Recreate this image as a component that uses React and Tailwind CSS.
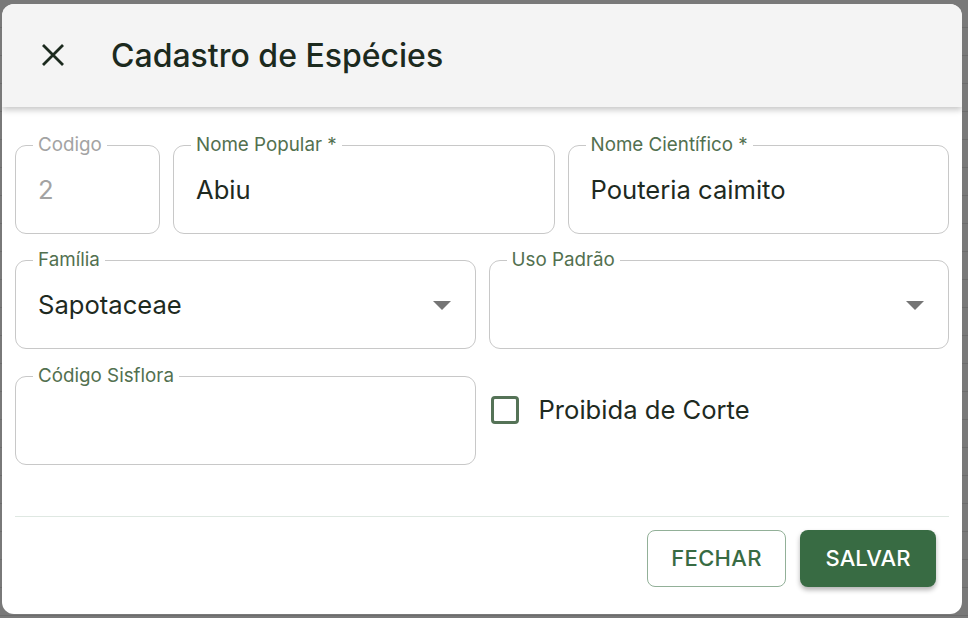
import React from "react";

const font = { fontFamily: "Inter, 'Noto Sans', sans-serif" };

function Field({ label, value, disabled, select, className = "" }) {
  return (
    <fieldset
      className={`h-[100px] min-w-0 rounded-[11px] border border-[#c8c8c8] px-[17px] ${className}`}
    >
      <legend
        className={`px-[5px] text-[18.8px] leading-[22px] ${
          disabled ? "text-[#a3a3a3]" : "text-[#52704f]"
        }`}
      >
        {label}
      </legend>
      <div className="mt-[19px] flex h-[30px] items-center justify-between pl-[5px]">
        <span
          className={`text-[25.6px] leading-[30px] ${
            disabled ? "text-[#a3a3a3]" : "text-[#1e2a1f]"
          }`}
        >
          {value}
        </span>
        {select && (
          <svg width="18" height="9" viewBox="0 0 18 9" className="mr-[7px]">
            <path d="M0 0 L18 0 L9 9 Z" fill="#757575" />
          </svg>
        )}
      </div>
    </fieldset>
  );
}

export default function App() {
  const lines = Array.from({ length: 22 });
  return (
    <div className="relative h-[618px] w-[968px] overflow-hidden bg-[#797979]" style={font}>
      <div className="flex h-full flex-col">
        {lines.map((_, i) => (
          <div key={i} className="h-[28px] shrink-0 border-b border-[#6c6c6c]" />
        ))}
      </div>
      <div className="absolute left-[2px] top-[4px] flex h-[610px] w-[960px] flex-col overflow-hidden rounded-[12px] bg-white">
        <div className="relative z-10 flex h-[103px] shrink-0 items-center bg-[#f4f4f4] pl-[38px] shadow-[0_3px_6px_rgba(0,0,0,0.22)]">
          <svg width="26" height="26" viewBox="0 0 26 26" className="mt-[-2px]">
            <path d="M3 3 L23 23 M23 3 L3 23" stroke="#1c2a1e" strokeWidth="2.8" strokeLinecap="butt" />
          </svg>
          <h1 className="ml-[45px] text-[32px] font-medium leading-none text-[#1c2a1e]">
            Cadastro de Espécies
          </h1>
        </div>
        <div className="flex flex-col px-[13px] pt-[27px]">
          <div className="flex gap-[13px]">
            <Field label="Codigo" value="2" disabled className="w-[145px] shrink-0" />
            <Field label="Nome Popular *" value="Abiu" className="flex-1" />
            <Field label="Nome Científico *" value="Pouteria caimito" className="flex-1" />
          </div>
          <div className="mt-[15px] grid grid-cols-2 gap-[13px]">
            <Field label="Família" value="Sapotaceae" select />
            <Field label="Uso Padrão" value="" select />
          </div>
          <div className="mt-[16px] grid grid-cols-2 gap-[13px]">
            <Field label="Código Sisflora" value="" />
            <div className="flex items-start pl-[2px] pt-[20px]">
              <div className="flex items-center gap-[20px] pt-[10px]">
                <span className="h-[28px] w-[28px] rounded-[4px] border-[3px] border-[#557357]" />
                <span className="text-[25.6px] leading-[30px] text-[#1e2a1f]">Proibida de Corte</span>
              </div>
            </div>
          </div>
          <div className="mt-[51px] h-px bg-[#dfe8e2]" />
          <div className="mt-[13px] flex justify-end gap-[14px] pr-[13px]">
            <button className="h-[57px] w-[139px] rounded-[8px] border border-[#92b098] text-[22px] font-medium tracking-[0.3px] text-[#386b43]">
              FECHAR
            </button>
            <button className="h-[57px] w-[136px] rounded-[8px] bg-[#386b43] text-[22px] font-medium tracking-[0.1px] text-white shadow-[0_3px_5px_rgba(0,0,0,0.3)]">
              SALVAR
            </button>
          </div>
        </div>
      </div>
    </div>
  );
}
